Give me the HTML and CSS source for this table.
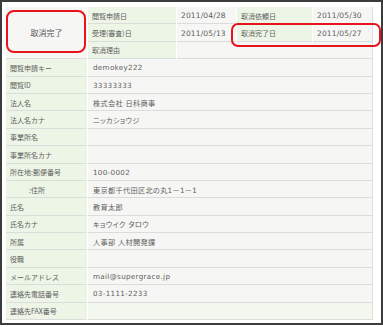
FILE: index.html
```html
<!DOCTYPE html>
<html lang="ja">
<head>
<meta charset="utf-8">
<link rel="stylesheet" href="styles.css">
</head>
<body>
<div class="frame">
  <div class="sheet">
    <div class="head">
      <div class="status">取消完了</div>
      <div class="lbl">閲覧申請日</div>
      <div class="val">2011/04/28</div>
      <div class="lbl">取消依頼日</div>
      <div class="val">2011/05/30</div>
      <div class="lbl">受理(審査)日</div>
      <div class="val">2011/05/13</div>
      <div class="lbl">取消完了日</div>
      <div class="val">2011/05/27</div>
      <div class="lbl">取消理由</div>
      <div class="val span3"></div>
    </div>
    <div class="main">
      <div class="lbl">閲覧申請キー</div><div class="val">demokey222</div>
      <div class="lbl">閲覧ID</div><div class="val">33333333</div>
      <div class="lbl">法人名</div><div class="val">株式会社 日科商事</div>
      <div class="lbl">法人名カナ</div><div class="val">ニッカショウジ</div>
      <div class="lbl">事業所名</div><div class="val"></div>
      <div class="lbl">事業所名カナ</div><div class="val"></div>
      <div class="lbl">所在地:郵便番号</div><div class="val">100-0002</div>
      <div class="lbl indent">:住所</div><div class="val">東京都千代田区北の丸1－1－1</div>
      <div class="lbl">氏名</div><div class="val">教育太郎</div>
      <div class="lbl">氏名カナ</div><div class="val">キョウイク タロウ</div>
      <div class="lbl">所属</div><div class="val">人事部 人材開発課</div>
      <div class="lbl">役職</div><div class="val"></div>
      <div class="lbl">メールアドレス</div><div class="val">mail@supergrace.jp</div>
      <div class="lbl">連絡先電話番号</div><div class="val">03-1111-2233</div>
      <div class="lbl last">連絡先FAX番号</div><div class="val last"></div>
    </div>
  </div>
  <div class="mark mark-status"></div>
  <div class="mark mark-date"></div>
</div>
</body>
</html>
```
FILE: styles.css
```css
html, body {
  margin: 0;
  padding: 0;
  background: #ffffff;
}

.frame {
  position: relative;
  box-sizing: border-box;
  width: 383px;
  height: 325px;
  border: 2px solid #3c3c3c;
  background: #ffffff;
  padding: 5px 0 0 4px;
}

.sheet {
  width: 366px;
  border-right: 1px solid #dedede;
}

.head {
  display: grid;
  grid-template-columns: 81px 88px 59px 75px 59px;
  grid-template-rows: repeat(3, 17.4px);
  column-gap: 1px;
}

.main {
  display: grid;
  grid-template-columns: 81px 1fr;
  grid-auto-rows: 17.4px;
  column-gap: 1px;
}

.lbl, .val, .status {
  box-sizing: border-box;
  border-bottom: 1px solid #dcdcdc;
  display: flex;
  align-items: center;
  padding: 1px 0 0 4px;
  color: #5e5e5e;
  white-space: nowrap;
  overflow: hidden;
}

.lbl {
  background: #edf5e6;
  font: 7px "Noto Sans CJK JP", sans-serif;
}

.val {
  background: #f6f7f4;
  font: 7.2px "DejaVu Sans", "Noto Sans CJK JP", sans-serif;
  font-feature-settings: "palt";
  letter-spacing: 0.3px;
  padding-left: 5px;
}

.head .val {
  font-size: 7.5px;
  letter-spacing: 0.15px;
  padding-left: 4px;
}

.status {
  grid-row: 1 / span 3;
  background: #f6f7f4;
  justify-content: center;
  padding: 0;
  font: 8px "Noto Sans CJK JP", sans-serif;
  color: #555555;
}

.span3 {
  grid-column: 3 / span 3;
}

.indent {
  padding-left: 23px;
}

.val.last {
  background: #f2f8ee;
}

.mark {
  position: absolute;
  box-sizing: border-box;
  border: 2px solid #e8141c;
  border-radius: 8px;
}

.mark-status {
  left: 4px;
  top: 8px;
  width: 80px;
  height: 43px;
}

.mark-date {
  left: 229px;
  top: 21px;
  width: 150px;
  height: 24px;
  border-radius: 7px;
}
```
